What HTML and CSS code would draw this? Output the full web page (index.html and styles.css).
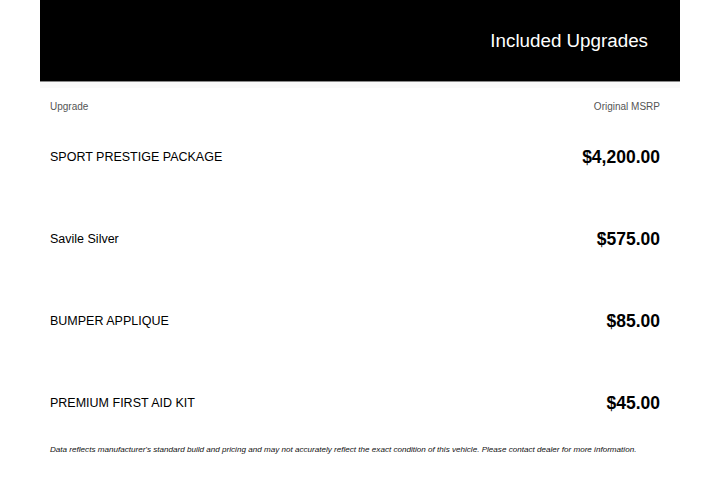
FILE: index.html
```html
<!DOCTYPE html>
<html>
<head>
<meta charset="utf-8">
<link rel="stylesheet" href="styles.css">
</head>
<body>
<div class="card">
  <div class="banner"><h1 class="title">Included Upgrades</h1></div>
  <div class="band"></div>
  <div class="table">
    <div class="head"><span>Upgrade</span><span>Original MSRP</span></div>
    <div class="row"><span class="name">SPORT PRESTIGE PACKAGE</span><span class="price">$4,200.00</span></div>
    <div class="row"><span class="name">Savile Silver</span><span class="price">$575.00</span></div>
    <div class="row"><span class="name">BUMPER APPLIQUE</span><span class="price">$85.00</span></div>
    <div class="row"><span class="name">PREMIUM FIRST AID KIT</span><span class="price">$45.00</span></div>
    <p class="note">Data reflects manufacturer's standard build and pricing and may not accurately reflect the exact condition of this vehicle. Please contact dealer for more information.</p>
  </div>
</div>
</body>
</html>
```
FILE: styles.css
```css
html, body { margin: 0; padding: 0; background: #fff; }
body { font-family: "Liberation Sans", Arial, sans-serif; color: #000; }
.card { width: 640px; margin: 0 auto; }
.banner {
  background: #000;
  height: 82px;
  border-bottom: 1px solid #8a8a8a;
  display: flex;
  align-items: center;
  justify-content: flex-end;
  padding-right: 32px;
  box-sizing: border-box;
}
.title { margin: 0; color: #fff; font-weight: normal; font-size: 18.8px; line-height: 24px; }
.band { height: 6px; background: #fafafa; }
.table { padding: 0 20px 0 10px; }
.head {
  display: flex; justify-content: space-between;
  font-size: 10px; line-height: 14px; color: #555;
  padding-top: 12px; margin-bottom: 2px;
}
.row {
  display: flex; justify-content: space-between; align-items: center;
  height: 82px;
}
.name { font-size: 12.5px; }
.price { font-size: 17.5px; font-weight: bold; }
.note { margin: 0; font-size: 8.1px; line-height: 12px; font-style: italic; color: #111; white-space: nowrap; }
```
